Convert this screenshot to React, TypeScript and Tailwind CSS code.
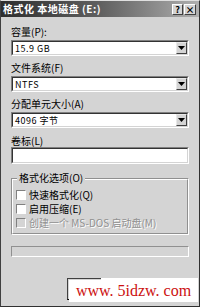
import React from 'react';

const font = { fontFamily: '"Noto Sans CJK SC", "DejaVu Sans", sans-serif' };

function Sunken({ className = '', children }: { className?: string; children?: React.ReactNode }) {
  return (
    <div className={`border border-t-[#808080] border-l-[#808080] border-b-white border-r-white ${className}`}>
      <div className="h-full border border-t-[#333] border-l-[#333] border-b-[#d4d4d4] border-r-[#d4d4d4] bg-white">
        {children}
      </div>
    </div>
  );
}

function Combo({ value, className = '' }: { value: string; className?: string }) {
  return (
    <Sunken className={`h-[16px] ${className}`}>
      <div className="flex h-full items-center">
        <span className="flex-1 pl-[2px] text-[9px] leading-none tracking-[0.5px] text-black">{value}</span>
        <div className="flex h-full w-[11px] items-center justify-center border border-t-[#e8e8e8] border-l-[#e8e8e8] border-b-[#404040] border-r-[#404040] bg-[#d4d4d4]">
          <svg width="7" height="4" viewBox="0 0 7 4">
            <path d="M0 0h7L3.5 4z" fill="#000" />
          </svg>
        </div>
      </div>
    </Sunken>
  );
}

function Check({ label, disabled }: { label: string; disabled?: boolean }) {
  return (
    <div className="flex h-[14px] items-center gap-[3px]">
      <div
        className={`h-[10px] w-[10px] shrink-0 border border-t-[#808080] border-l-[#808080] border-b-white border-r-white ${
          disabled ? 'bg-[#d4d4d4]' : 'bg-white'
        }`}
      />
      <span
        className={`whitespace-nowrap text-[10px] leading-[12px] ${
          disabled ? 'text-[#909090] [text-shadow:1px_1px_0_#fff]' : 'text-black'
        }`}
      >
        {label}
      </span>
    </div>
  );
}

export default function App() {
  return (
    <div
      className="relative flex h-[307px] w-[200px] flex-col overflow-hidden border border-t-[#e0e0e0] border-l-[#404040] border-b-[#303030] border-r-[#303030] bg-[#d4d4d4]"
      style={font}
    >
      <div className="flex h-[16px] items-center bg-gradient-to-r from-[#2e2e2e] via-[#606060] to-[#b0b0b0] pl-[2px] pr-[3px]">
        <span className="flex-1 text-[10px] font-bold leading-none tracking-[0.5px] text-white">
          格式化 本地磁盘 (E:)
        </span>
        <div className="flex gap-[1px]">
          <div className="flex h-[11px] w-[11px] items-center justify-center border border-t-white border-l-white border-b-[#404040] border-r-[#404040] bg-[#d4d4d4] text-[9px] font-bold leading-none text-black">
            ?
          </div>
          <div className="flex h-[11px] w-[12px] items-center justify-center border border-t-white border-l-white border-b-[#404040] border-r-[#404040] bg-[#d4d4d4] text-[9px] font-bold leading-none text-black">
            ×
          </div>
        </div>
      </div>

      <div className="flex flex-col px-[10px] pt-[10px]">
        <span className="text-[10px] leading-none text-black">容量(P):</span>
        <Combo value="15.9 GB" className="mt-[3px]" />

        <span className="mt-[7px] text-[10px] leading-none text-black">文件系统(F)</span>
        <Combo value="NTFS" className="mt-[3px]" />

        <span className="mt-[7px] text-[10px] leading-none text-black">分配单元大小(A)</span>
        <Combo value="4096 字节" className="mt-[3px]" />

        <span className="mt-[8px] text-[10px] leading-none text-black">卷标(L)</span>
        <Sunken className="mt-[1px] h-[17px]" />

        <div className="relative mt-[14px] h-[57px] border border-t-[#909090] border-l-[#909090] border-b-white border-r-white">
          <div className="h-full border border-t-white border-l-white border-b-[#909090] border-r-[#909090]">
            <span className="absolute -top-[6px] left-[5px] bg-[#d4d4d4] px-[2px] text-[10px] leading-none text-black">
              格式化选项(O)
            </span>
            <div className="flex flex-col pl-[3px] pt-[8px]">
              <Check label="快速格式化(Q)" />
              <Check label="启用压缩(E)" />
              <Check label="创建一个 MS-DOS 启动盘(M)" disabled />
            </div>
          </div>
        </div>

        <div className="mt-[11px] h-[11px] border border-t-[#909090] border-l-[#909090] border-b-white border-r-white" />

        <div className="ml-[56px] mt-[21px] h-[22px] w-[60px] border border-t-[#404040] border-l-[#404040]" />
      </div>

      <div className="absolute left-[68px] top-[279px] flex h-[22px] w-[129px] items-center justify-center bg-white">
        <span
          className="whitespace-nowrap text-[16px] leading-none text-[#cc1010]"
          style={{ fontFamily: '"Liberation Serif", serif' }}
        >
          www. 5idzw. com
        </span>
      </div>
      <div className="absolute left-[100px] top-[277px] h-[2px] w-[97px] bg-white" />
    </div>
  );
}
